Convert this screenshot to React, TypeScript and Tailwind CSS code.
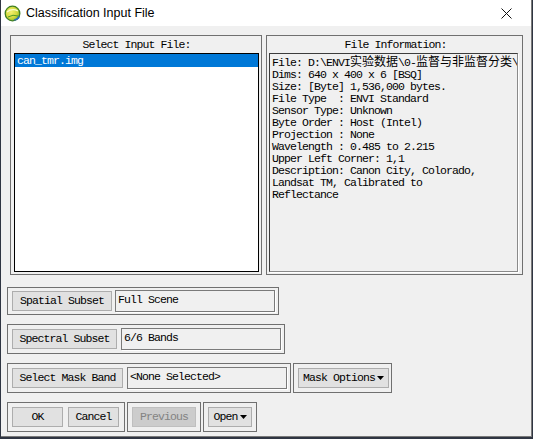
import React from "react";

const mono = "font-['Liberation_Mono','Noto_Sans_CJK_SC',monospace] text-[11.5px] tracking-[-0.9px] text-black";

function Tri() {
  return (
    <svg width="7" height="4" viewBox="0 0 7 4" className="ml-[2px]">
      <polygon points="0,0 7,0 3.5,4" fill="#000" />
    </svg>
  );
}

function Btn({ className, children, disabled }: { className: string; children: React.ReactNode; disabled?: boolean }) {
  return (
    <div
      className={`flex h-[20px] shrink-0 items-center justify-center border leading-[14px] ${mono} ${
        disabled ? "border-[#bfbfbf] bg-[#cccccc] !text-[#838383]" : "border-[#adadad] bg-[#e1e1e1]"
      } ${className}`}
    >
      {children}
    </div>
  );
}

function Field({ className, children }: { className: string; children: React.ReactNode }) {
  return (
    <div
      className={`h-[22px] shrink-0 border border-[#7a7a7a] bg-[#f0f0f0] pl-[2px] pt-[2px] leading-[14px] shadow-[1px_1px_0_#ffffff] ${mono} ${className}`}
    >
      {children}
    </div>
  );
}

const cjk = "text-[12px] tracking-[0px] font-['Noto_Sans_CJK_SC',sans-serif]";

export default function App() {
  return (
    <div className="h-[439px] w-[533px] overflow-hidden bg-[#2f3542]">
      <div className="ml-[1px] flex h-[437px] w-[531px] flex-col border-b border-r border-[#7a7a7a] bg-[#f0f0f0]">
        {/* Title bar */}
        <div className="flex h-[26px] shrink-0 items-center bg-white">
          <svg width="17" height="17" viewBox="0 0 17 17" className="ml-[3px]">
            <defs>
              <radialGradient id="g" cx="0.4" cy="0.4" r="0.7">
                <stop offset="0" stopColor="#f4f070" />
                <stop offset="0.6" stopColor="#cfd83a" />
                <stop offset="1" stopColor="#6aa82c" />
              </radialGradient>
            </defs>
            <circle cx="8.5" cy="8.5" r="7.3" fill="url(#g)" stroke="#3f7f22" strokeWidth="1.3" />
            <path d="M3 7 Q8 3 14 6" stroke="#fbfbd0" strokeWidth="1.2" fill="none" />
            <path d="M4 12 Q9 9 14 11" stroke="#4f9a2a" strokeWidth="1" fill="none" />
            <path d="M10 14.5 Q14 13 15 10 L15.5 13 Q13 16 10 15.5 Z" fill="#2b6cc0" />
          </svg>
          <span className="ml-[5px] font-['Liberation_Sans',Arial,sans-serif] text-[12.5px] text-black">
            Classification Input File
          </span>
          <svg width="11" height="11" viewBox="0 0 11 11" className="ml-auto mr-[19px]">
            <path d="M0.5 0.5 L10.5 10.5 M10.5 0.5 L0.5 10.5" stroke="#111" strokeWidth="1" />
          </svg>
        </div>

        {/* Content */}
        <div className="flex flex-col pl-[6px]">
          {/* Top panels */}
          <div className="ml-[3px] mt-[9px] flex gap-[4px]">
            <div className="flex h-[240px] w-[252px] flex-col border border-[#707070] pl-[3px] pr-[2px]">
              <div className={`flex h-[17px] items-center justify-center ${mono}`}>Select Input File:</div>
              <div className="h-[219px] w-[245px] border border-black bg-white">
                <div className={`flex h-[13px] items-center bg-[#0078d7] pl-[2px] leading-[13px] ${mono} !text-white`}>
                  can_tmr.img
                </div>
              </div>
            </div>
            <div className="flex h-[240px] w-[257px] flex-col border border-[#707070] pl-[2px]">
              <div className={`flex h-[17px] items-center justify-center ${mono}`}>File Information:</div>
              <div
                className={`h-[219px] w-[249px] overflow-hidden border border-b-[#8a8a8a] border-l-[#3c3c3c] border-r-[#8a8a8a] border-t-[#3c3c3c] bg-[#f0f0f0] pl-[2px] pt-[1px] shadow-[1px_1px_0_#ffffff] ${mono} leading-[12px]`}
              >
                <div className="whitespace-nowrap">
                  File: D:\ENVI<span className={cjk}>实验数据</span>\0-<span className={cjk}>监督与非监督分类</span>\
                </div>
                <div className="whitespace-nowrap">Dims: 640 x 400 x 6 [BSQ]</div>
                <div className="whitespace-nowrap">Size: [Byte] 1,536,000 bytes.</div>
                <div className="whitespace-pre">File Type  : ENVI Standard</div>
                <div className="whitespace-nowrap">Sensor Type: Unknown</div>
                <div className="whitespace-pre">Byte Order : Host (Intel)</div>
                <div className="whitespace-pre">Projection : None</div>
                <div className="whitespace-pre">Wavelength : 0.485 to 2.215</div>
                <div className="whitespace-nowrap">Upper Left Corner: 1,1</div>
                <div className="whitespace-nowrap">Description: Canon City, Colorado,</div>
                <div className="whitespace-nowrap">Landsat TM, Calibrated to</div>
                <div className="whitespace-nowrap">Reflectance</div>
              </div>
            </div>
          </div>

          {/* Spatial subset */}
          <div className="mt-[12px] flex h-[28px] w-[272px] items-center gap-[3px] border border-[#707070] pl-[4px]">
            <Btn className="w-[100px]">Spatial Subset</Btn>
            <Field className="w-[160px]">Full Scene</Field>
          </div>

          {/* Spectral subset */}
          <div className="mt-[9px] flex h-[30px] w-[278px] items-center gap-[4px] border border-[#707070] pl-[4px]">
            <Btn className="w-[105px]">Spectral Subset</Btn>
            <Field className="w-[160px]">6/6 Bands</Field>
          </div>

          {/* Mask */}
          <div className="mt-[9px] flex gap-[2px]">
            <div className="flex h-[30px] w-[284px] items-center gap-[4px] border border-[#707070] pl-[4px]">
              <Btn className="w-[111px]">Select Mask Band</Btn>
              <Field className="w-[160px]">&lt;None Selected&gt;</Field>
            </div>
            <div className="flex h-[30px] w-[99px] items-center border border-[#707070] pl-[4px]">
              <Btn className="w-[91px]">
                Mask Options
                <Tri />
              </Btn>
            </div>
          </div>

          {/* Bottom buttons */}
          <div className="mt-[9px] flex gap-[2px]">
            <div className="flex h-[30px] w-[118px] items-center gap-[5px] border border-[#707070] pl-[4px]">
              <Btn className="w-[51px]">OK</Btn>
              <Btn className="w-[51px]">Cancel</Btn>
            </div>
            <div className="flex h-[30px] w-[74px] items-center border border-[#707070] pl-[4px]">
              <Btn className="w-[64px]" disabled>
                Previous
              </Btn>
            </div>
            <div className="flex h-[30px] w-[54px] items-center border border-[#707070] pl-[4px]">
              <Btn className="w-[44px]">
                Open
                <Tri />
              </Btn>
            </div>
          </div>
        </div>
      </div>
    </div>
  );
}
